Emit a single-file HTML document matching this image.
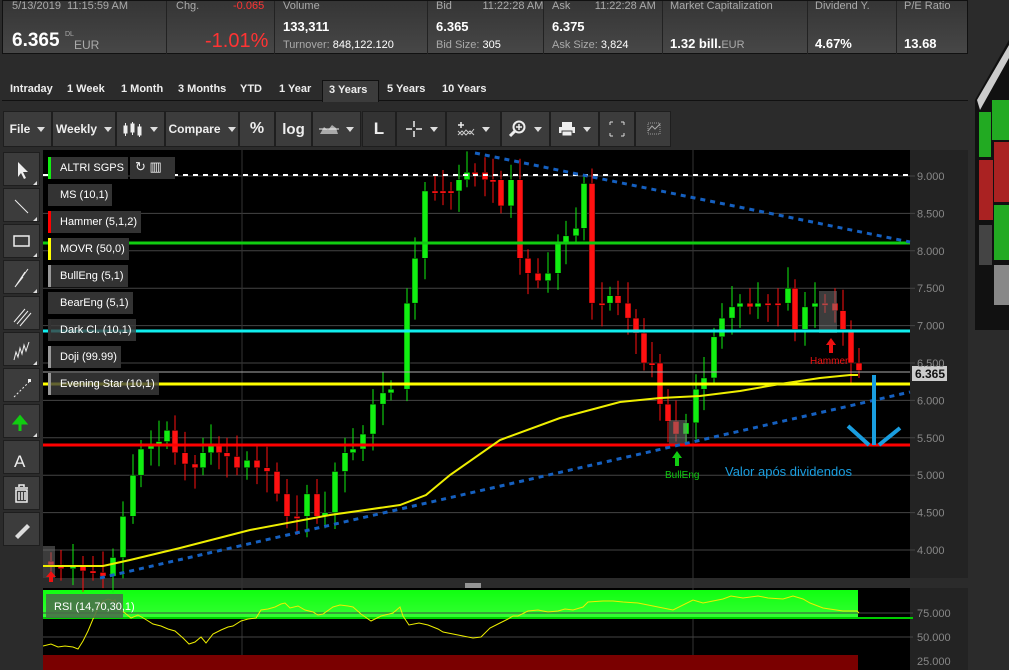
<!DOCTYPE html>
<html><head><meta charset="utf-8">
<style>
*{margin:0;padding:0;box-sizing:border-box}
body{width:1009px;height:670px;background:#2b2b2b;font-family:"Liberation Sans",sans-serif;overflow:hidden;position:relative;color:#fff}
.hdr{position:absolute;top:0;left:2px;width:966px;height:54px;background:linear-gradient(#353535,#474747);border:1px solid #111;}
.cell{position:absolute;top:0;height:53px;border-right:1px solid #222}
.lbl{position:absolute;font-size:11px;color:#aaa;white-space:nowrap}
.big{position:absolute;font-weight:bold;color:#fff;white-space:nowrap}
.tabs{position:absolute;top:78px;left:2px;width:966px;height:23px;border-bottom:1px solid #111}
.tab{position:absolute;top:5px;font-size:11px;font-weight:bold;color:#eee}
.tb{position:absolute;top:111px;height:36px;background:#3c3c3c;border:1px solid #1e1e1e;color:#eee;font-size:12px;font-weight:bold;display:flex;align-items:center;justify-content:center}
.dd::after{content:"";border:4px solid transparent;border-top:5px solid #ddd;margin-left:7px;margin-top:4px}
.lt{position:absolute;left:3px;width:37px;height:34px;background:#3c3c3c;border:1px solid #1e1e1e}
.leg{position:absolute;left:48px;height:22px;background:#333;font-size:11px;color:#fff;padding:5px 0 0 9px;border-left:3px solid #333;white-space:nowrap}
</style></head><body>
<div class="hdr">
 <div class="cell" style="left:0;width:164px"><span class="lbl" style="left:9px;top:-1px">5/13/2019&nbsp; 11:15:59 AM</span><span class="big" style="left:9px;top:29px;font-size:19px">6.365</span><span class="lbl" style="left:62px;top:30px;font-size:7px">DL</span><span class="lbl" style="left:71px;top:37px;font-size:12px">EUR</span></div>
 <div class="cell" style="left:164px;width:108px"><span class="lbl" style="left:9px;top:-1px">Chg.</span><span class="lbl" style="left:66px;top:-1px;color:#f33">-0.065</span><span class="big" style="left:38px;top:29px;font-size:20px;color:#f33;font-weight:normal">-1.01%</span></div>
 <div class="cell" style="left:272px;width:153px"><span class="lbl" style="left:8px;top:-1px">Volume</span><span class="big" style="left:8px;top:18px;font-size:13px">133,311</span><span class="lbl" style="left:8px;top:38px">Turnover: <span style="color:#fff">848,122.120</span></span></div>
 <div class="cell" style="left:425px;width:116px"><span class="lbl" style="left:8px;top:-1px">Bid&nbsp;&nbsp;&nbsp;&nbsp;&nbsp;&nbsp;&nbsp;&nbsp;&nbsp; 11:22:28 AM</span><span class="big" style="left:8px;top:18px;font-size:13px">6.365</span><span class="lbl" style="left:8px;top:38px">Bid Size: <span style="color:#fff">305</span></span></div>
 <div class="cell" style="left:541px;width:119px"><span class="lbl" style="left:8px;top:-1px">Ask&nbsp;&nbsp;&nbsp;&nbsp;&nbsp;&nbsp;&nbsp; 11:22:28 AM</span><span class="big" style="left:8px;top:18px;font-size:13px">6.375</span><span class="lbl" style="left:8px;top:38px">Ask Size: <span style="color:#fff">3,824</span></span></div>
 <div class="cell" style="left:660px;width:145px"><span class="lbl" style="left:7px;top:-1px">Market Capitalization</span><span class="big" style="left:7px;top:35px;font-size:13px">1.32 bill.<span style="font-weight:normal;color:#aaa;font-size:11px">EUR</span></span></div>
 <div class="cell" style="left:805px;width:89px"><span class="lbl" style="left:7px;top:-1px">Dividend Y.</span><span class="big" style="left:7px;top:35px;font-size:13px">4.67%</span></div>
 <div class="cell" style="left:894px;width:72px;border:none"><span class="lbl" style="left:7px;top:-1px">P/E Ratio</span><span class="big" style="left:7px;top:35px;font-size:13px">13.68</span></div>
</div>
<div class="tabs">
 <span class="tab" style="left:8px">Intraday</span><span class="tab" style="left:65px">1 Week</span><span class="tab" style="left:119px">1 Month</span><span class="tab" style="left:176px">3 Months</span><span class="tab" style="left:238px">YTD</span><span class="tab" style="left:277px">1 Year</span>
 <div style="position:absolute;left:320px;top:2px;width:57px;height:22px;background:#3c3c3c;border:1px solid #111;border-bottom:none"></div>
 <span class="tab" style="left:327px;top:6px">3 Years</span><span class="tab" style="left:385px">5 Years</span><span class="tab" style="left:440px">10 Years</span>
</div>
<div class="tb dd" style="left:3px;width:49px">File</div>
<div class="tb dd" style="left:52px;width:64px">Weekly</div>
<div class="tb dd" style="left:116px;width:49px"><svg width="20" height="16"><g fill="#eee" stroke="#eee"><rect x="1" y="5" width="3" height="7"/><line x1="2.5" y1="2" x2="2.5" y2="15"/><rect x="8" y="3" width="3" height="8"/><line x1="9.5" y1="1" x2="9.5" y2="14"/><rect x="15" y="6" width="3" height="8"/><line x1="16.5" y1="3" x2="16.5" y2="16"/></g></svg></div>
<div class="tb dd" style="left:165px;width:74px">Compare</div>
<div class="tb" style="left:239px;width:36px;font-size:16px">%</div>
<div class="tb" style="left:275px;width:37px;font-size:15px">log</div>
<div class="tb dd" style="left:312px;width:49px"><svg width="20" height="14"><path d="M1 12 L5 5 L9 8 L13 3 L17 6 L19 12Z" fill="#aaa"/><line x1="0" y1="7" x2="20" y2="7" stroke="#eee"/></svg></div>
<div class="tb" style="left:362px;width:34px;background:#333;font-size:17px">L</div>
<div class="tb dd" style="left:396px;width:50px;background:#333"><svg width="18" height="18"><path d="M9 1V7M9 11V17M1 9H7M11 9H17" stroke="#eee" stroke-width="1.5"/></svg></div>
<div class="tb dd" style="left:446px;width:55px;background:#333"><svg width="18" height="16"><path d="M1 10 L5 14 L9 9 L13 13 L17 8 M1 14 L5 10 L9 14 L13 10 L17 14" stroke="#ccc" fill="none"/><path d="M4 1V7M1 4H7" stroke="#eee" stroke-width="1.5"/></svg></div>
<div class="tb dd" style="left:501px;width:49px"><svg width="18" height="18"><circle cx="10" cy="7" r="5.5" stroke="#eee" stroke-width="2" fill="none"/><path d="M6 11 L1 16" stroke="#eee" stroke-width="3"/><path d="M10 4V10M7 7H13" stroke="#eee" stroke-width="1.5"/></svg></div>
<div class="tb dd" style="left:550px;width:49px"><svg width="18" height="16"><rect x="4" y="1" width="10" height="6" fill="#eee"/><rect x="1" y="6" width="16" height="6" fill="#eee"/><rect x="4" y="10" width="10" height="5" fill="#eee" stroke="#3c3c3c"/></svg></div>
<div class="tb" style="left:599px;width:36px"><svg width="16" height="16"><path d="M1 1H4M1 1V4M15 1H12M15 1V4M1 15H4M1 15V12M15 15H12M15 15V12" stroke="#ddd"/></svg></div>
<div class="tb" style="left:635px;width:36px"><svg width="16" height="16"><rect x="3" y="2" width="12" height="11" fill="none" stroke="#999" stroke-dasharray="1 1"/><path d="M3 10 L7 5 L10 8 L15 3" stroke="#aaa" fill="none"/></svg></div>
<div style="position:absolute;left:2px;top:150px;width:40px;height:520px;background:#2b2b2b"></div>
<div class="lt" style="top:152px"></div><div class="lt" style="top:188px"></div><div class="lt" style="top:224px"></div><div class="lt" style="top:260px"></div><div class="lt" style="top:296px"></div><div class="lt" style="top:332px"></div><div class="lt" style="top:368px"></div><div class="lt" style="top:404px"></div><div class="lt" style="top:440px"></div><div class="lt" style="top:476px"></div><div class="lt" style="top:512px"></div>
<svg style="position:absolute;left:3px;top:152px" width="37" height="400">
<path d="M15 10 V25 L18 21 L21 27 L23 26 L20 20 L25 20 Z" fill="#eee"/>
<line x1="12" y1="48" x2="25" y2="61" stroke="#eee"/>
<rect x="11" y="84" width="15" height="10" fill="none" stroke="#eee" stroke-width="1.5"/>
<path d="M12 135 L25 117 M12 135 L22 120 M12 135 L20 125" stroke="#eee"/>
<path d="M11 170 L22 157 M14 172 L25 159 M17 174 L28 161" stroke="#eee"/>
<path d="M11 208 L13 200 L15 205 L17 196 L19 202 L21 193 L23 199 L26 190" stroke="#eee" fill="none"/>
<path d="M11 245 L26 230" stroke="#eee" stroke-dasharray="2 2"/><rect x="25" y="227" width="3" height="3" fill="#eee"/>
<path d="M17 279 V270 M12 271 L17 265 L22 271Z" stroke="#1c1" fill="#1c1" stroke-width="3"/>
<text x="11" y="315" fill="#eee" font-size="17" font-family="Liberation Sans">A</text>
<path d="M12 336 H25 M16 335 V333 H21 V335 M13 338 H24 V350 H13Z M16 340V348 M19 340V348 M22 340V348" stroke="#eee" fill="none" stroke-width="1.5"/>
<path d="M12 384 L24 372 L27 375 L15 387 Z" fill="#ddd"/>
<path d="M30 33 L34 29 V33Z M30 69 L34 65 V69Z M30 105 L34 101 V105Z M30 141 L34 137 V141Z M30 213 L34 209 V213Z M30 285 L34 281 V285Z" fill="#ddd"/>
</svg>
<svg id="ch" style="position:absolute;left:43px;top:150px" width="925" height="520">
<rect x="0" y="0" width="867" height="428" fill="#000"/>
<rect x="867" y="0" width="58" height="428" fill="#232323"/>
<rect x="0" y="428" width="925" height="10" fill="#2b2b2b"/>
<path d="M422 434h16M422 436h16M422 438h16" stroke="#fff"/>
<rect x="0" y="438" width="867" height="82" fill="#000"/>
<rect x="867" y="438" width="58" height="82" fill="#232323"/>
<g id="grid" stroke="#444" stroke-width="1"></g>
<line x1="199" y1="0" x2="199" y2="520" stroke="#333"/><line x1="650" y1="0" x2="650" y2="520" stroke="#333"/>
<defs><linearGradient id="gg" x1="0" y1="0" x2="0" y2="1"><stop offset="0" stop-color="#10ff10"/><stop offset="1" stop-color="#3f3"/></linearGradient></defs>
<rect x="0" y="440" width="815" height="28" fill="url(#gg)"/><line x1="0" y1="468" x2="870" y2="468" stroke="#0c0" stroke-width="2"/>
<rect x="0" y="505" width="815" height="15" fill="#7a0000"/>
<line x1="0" y1="487" x2="870" y2="487" stroke="#444"/><line x1="0" y1="463" x2="870" y2="463" stroke="#444"/>
<polyline transform="translate(0,-9)" fill="none" stroke="#ee0" stroke-width="1" points="0,505 8,503 15,506 22,505 30,506 35,508 40,500 45,490 50,478 55,467 60,460 65,458 70,460 72,459 75,468 82,472 88,477 95,474 102,478 110,483 118,485 125,488 132,490 140,497 146,503 152,501 158,496 163,502 170,493 178,489 185,486 190,485 198,480 205,478 213,477 218,469 225,468 232,466 238,463 242,462 247,467 255,465 262,469 270,471 275,474 280,473 290,466 297,464 305,465 310,466 318,473 328,480 338,475 350,472 357,466 360,475 366,484 376,482 385,484 395,488 400,491 410,493 420,495 430,497 438,496 447,487 455,483 465,478 470,475 475,475 485,470 495,469 505,471 515,470 522,468 530,469 540,466 545,461 560,460 570,460 580,461 595,462 610,465 630,469 650,459 660,462 670,460 680,458 688,455 700,457 715,455 725,457 740,458 750,455 760,458 767,462 780,467 800,470 814,470 816,472"/>
<rect x="3" y="444" width="77" height="24" fill="#4a6a4a" opacity="0.85"/>
<text x="11" y="460" font-size="11" fill="#fff" font-family="Liberation Sans">RSI (14,70,30,1)</text>
<g font-size="11" fill="#888" font-family="Liberation Sans"><text x="874" y="467">75.000</text><text x="874" y="491">50.000</text><text x="874" y="515">25.000</text></g>
<g id="cd"></g>
<line x1="0" y1="25" x2="867" y2="25" stroke="#fff" stroke-width="2" stroke-dasharray="5 5"/>
<line x1="0" y1="93" x2="867" y2="93" stroke="#1c1" stroke-width="3"/>
<line x1="0" y1="181" x2="867" y2="181" stroke="#1ee" stroke-width="3"/>
<line x1="0" y1="222" x2="867" y2="222" stroke="#aaa" stroke-width="1"/>
<line x1="0" y1="234" x2="867" y2="234" stroke="#ff0" stroke-width="3"/>
<line x1="0" y1="295" x2="867" y2="295" stroke="#f00" stroke-width="3"/>
<line x1="57" y1="428" x2="867" y2="242" stroke="#1560c0" stroke-width="3" stroke-dasharray="5 5"/>
<line x1="432" y1="3" x2="867" y2="92" stroke="#1560c0" stroke-width="3" stroke-dasharray="5 5"/>
<polyline fill="none" stroke="#ee0" stroke-width="2" points="0,416 60,416 87,410 137,398 207,380 287,365 357,355 383,345 407,325 457,290 517,268 577,252 617,248 657,246 697,241 737,234 777,228 807,225 815,225"/>
<path d="M831 225 V295 M805 276 L826 295 M836 295 L857 278" stroke="#1a9ee0" stroke-width="4" fill="none"/>
<rect x="869" y="216" width="35" height="15" fill="#ccc"/><text x="872" y="228" font-size="12" font-weight="bold" fill="#111" font-family="Liberation Sans">6.365</text>
<g font-size="11" fill="#888" font-family="Liberation Sans" id="ax"></g>
<text x="622" y="328" font-size="10" fill="#1c1" font-family="Liberation Sans">BullEng</text>
<path d="M634 301 L629 308 H632 V316 H636 V308 H639Z" fill="#1c1"/>
<text x="767" y="214" font-size="10" fill="#e11" font-family="Liberation Sans">Hammer</text>
<path d="M788 188 L783 195 H786 V203 H790 V195 H793Z" fill="#e11"/>
<path d="M8 421 L3 427 H6 V432 H10 V427 H13Z" fill="#e11"/>
<text x="682" y="326" font-size="13" fill="#1a9ee0" font-family="Liberation Sans">Valor após dividendos</text>
</svg>
<div class="leg" style="top:157px;border-left-color:#1e1;width:80px">ALTRI SGPS</div>
<div style="position:absolute;left:130px;top:157px;width:45px;height:22px;background:#333;color:#eee;font-size:13px;padding:2px 5px">↻&nbsp;▥</div>
<div class="leg" style="top:184px;width:64px">MS (10,1)</div>
<div class="leg" style="top:211px;border-left-color:#f00;width:93px">Hammer (5,1,2)</div>
<div class="leg" style="top:238px;border-left-color:#ff0;width:81px">MOVR (50,0)</div>
<div class="leg" style="top:265px;border-left-color:#999;width:80px">BullEng (5,1)</div>
<div class="leg" style="top:292px;width:85px">BearEng (5,1)</div>
<div class="leg" style="top:319px;width:88px;background:rgba(60,60,60,.8)">Dark Cl. (10,1)</div>
<div class="leg" style="top:346px;border-left-color:#999;width:73px">Doji (99.99)</div>
<div class="leg" style="top:373px;border-left-color:#999;width:111px;background:rgba(60,60,60,.8)">Evening Star (10,1)</div>
<svg style="position:absolute;left:972px;top:0" width="37" height="670">
<rect width="37" height="670" fill="#2b2b2b"/>
<polygon points="3,100 37,40 37,330 3,330" fill="#111"/>
<polygon points="5,100 37,45 37,58 8,110" fill="#ccc"/>
<rect x="7" y="112" width="12" height="45" fill="#2a2"/><rect x="20" y="100" width="17" height="40" fill="#2a2"/>
<rect x="7" y="160" width="14" height="60" fill="#a22"/><rect x="22" y="142" width="15" height="60" fill="#a22"/>
<rect x="22" y="205" width="15" height="55" fill="#2a2"/><rect x="7" y="225" width="13" height="40" fill="#444"/>
<rect x="22" y="265" width="15" height="40" fill="#888"/>
</svg>
<script>
var y=function(p){return 26+(9-p)*74.8};
var g=document.getElementById('grid'),ax=document.getElementById('ax'),ns='http://www.w3.org/2000/svg';
function el(t,a,p){var e=document.createElementNS(ns,t);for(var k in a)e.setAttribute(k,a[k]);p.appendChild(e);return e}
for(var p=4;p<=9;p+=0.5){var yy=y(p);el('line',{x1:0,y1:yy,x2:872,y2:yy},g);var t=el('text',{x:874,y:yy+4},ax);t.textContent=p.toFixed(3)}
var d=[[5,3.8],[15,3.75],[27,3.8],[37,3.72],[47,3.7],[57,3.65],[67,3.9],[77,4.45],[87,5.0],[95,5.35],[105,5.4],[113,5.45],[121,5.6],[129,5.3],[139,5.15],[149,5.1],[157,5.3],[165,5.4],[173,5.3],[181,5.25],[191,5.1],[201,5.2],[211,5.1],[221,5.05],[231,4.75],[241,4.45],[251,4.45],[261,4.75],[271,4.45],[279,4.5],[289,5.05],[299,5.3],[307,5.35],[317,5.55],[327,5.95],[337,6.1],[345,6.15],[361,7.3],[369,7.9],[379,8.8],[389,8.8],[397,8.8],[405,8.8],[413,8.95],[421,9.05],[429,9.05],[439,8.95],[447,8.95],[455,8.6],[465,8.95],[474,7.9],[482,7.7],[492,7.6],[502,7.7],[512,8.1],[520,8.2],[530,8.3],[538,8.9],[546,7.3],[556,7.3],[564,7.4],[572,7.3],[582,7.1],[590,6.9],[598,6.5],[606,6.5],[614,5.95],[622,5.72],[630,5.55],[640,5.7],[650,6.15],[658,6.3],[668,6.85],[676,7.1],[686,7.25],[694,7.3],[704,7.25],[712,7.3],[722,7.3],[732,7.3],[742,7.5],[749,6.95],[759,7.25],[769,7.3],[779,7.3],[789,7.2],[797,6.95],[805,6.5],[813,6.4]];
var c=document.getElementById('cd'),prev=3.85;
d.forEach(function(q,i){var o=prev,cl=q[1];if(Math.abs(o-cl)<0.03)cl=o-0.03;var up=cl>o,col=up?'#1e1':'#f11';var h=Math.max(o,cl)+0.12+(i%3)*0.08,l=Math.min(o,cl)-0.1-(i%4)*0.06;
el('line',{x1:q[0]+3,y1:y(h),x2:q[0]+3,y2:y(l),stroke:col},c);
el('rect',{x:q[0],y:y(Math.max(o,cl)),width:6,height:Math.max(2,Math.abs(y(o)-y(cl))),fill:col,stroke:'#000','stroke-width':0.5},c);prev=q[1]});
el('rect',{x:0,y:396,width:12,height:32,fill:'#777',opacity:0.5},c);
el('rect',{x:626,y:270,width:18,height:26,fill:'#777',opacity:0.5},c);
el('rect',{x:776,y:141,width:18,height:42,fill:'#777',opacity:0.5},c);
</script>
</body></html>
